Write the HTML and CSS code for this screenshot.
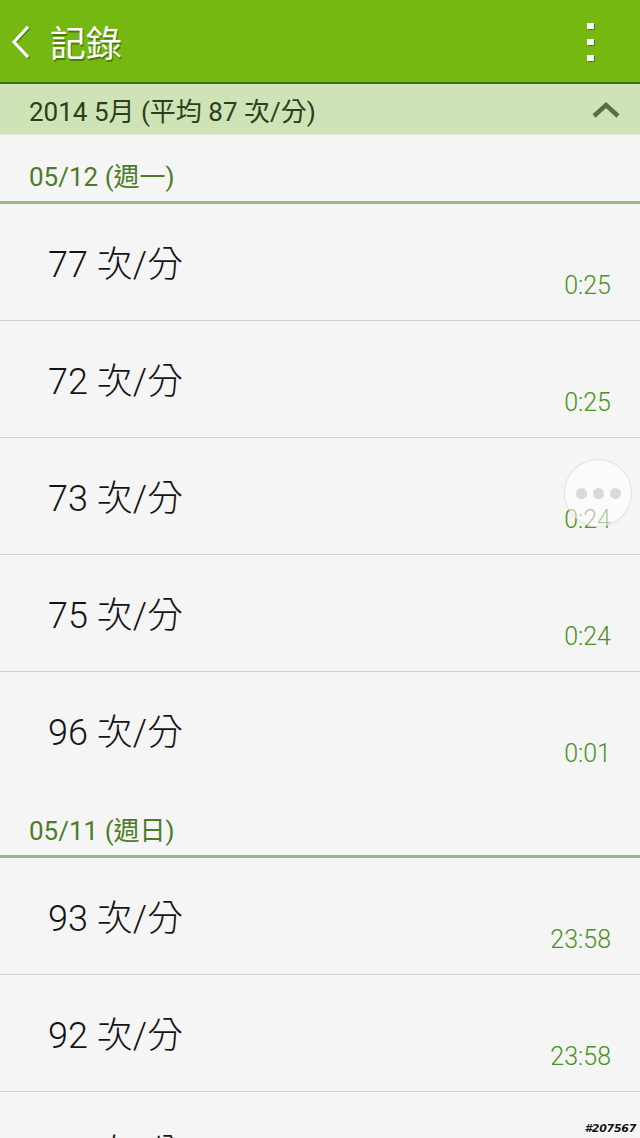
FILE: index.html
```html
<!DOCTYPE html>
<html lang="zh-Hant">
<head>
<meta charset="utf-8">
<title>記錄</title>
<link rel="stylesheet" href="styles.css">
</head>
<body>
<div class="screen">
  <header class="appbar">
    <div class="back">
      <svg width="24" height="34" viewBox="0 0 24 34"><polyline points="16,3 3,17 16,31" fill="none" stroke="#fff" stroke-width="3.2" stroke-linecap="square"/></svg>
    </div>
    <h1 class="title">記錄</h1>
    <div class="menu">
      <span class="dot"></span><span class="dot"></span><span class="dot"></span>
    </div>
  </header>

  <div class="month">
    <span class="month-text">2014 5月 (平均 87 次/分)</span>
    <svg class="caret" width="30" height="18" viewBox="0 0 30 18"><polyline points="3,15 15,4 27,15" fill="none" stroke="#5b6e4c" stroke-width="4.5"/></svg>
  </div>

  <section class="group">
    <div class="day">05/12 (週一)</div>
    <div class="row"><span class="val">77 次/分</span><span class="time">0:25</span></div>
    <div class="row"><span class="val">72 次/分</span><span class="time">0:25</span></div>
    <div class="row"><span class="val">73 次/分</span><span class="time">0:24</span></div>
    <div class="row"><span class="val">75 次/分</span><span class="time">0:24</span></div>
    <div class="row"><span class="val">96 次/分</span><span class="time">0:01</span></div>
  </section>

  <section class="group">
    <div class="day">05/11 (週日)</div>
    <div class="row"><span class="val">93 次/分</span><span class="time">23:58</span></div>
    <div class="row"><span class="val">92 次/分</span><span class="time">23:58</span></div>
    <div class="row"><span class="val">90 次/分</span><span class="time">23:57</span></div>
  </section>

  <div class="float-btn"><span></span><span></span><span></span></div>
  <div class="watermark">#207567</div>
</div>
</body>
</html>
```

FILE: styles.css
```css
html, body {
  margin: 0;
  padding: 0;
  width: 640px;
  height: 1138px;
  overflow: hidden;
  background: #f5f5f5;
}
.screen {
  position: relative;
  width: 640px;
  height: 1138px;
  overflow: hidden;
  font-family: Roboto, "Noto Sans CJK TC", sans-serif;
  background: #f5f5f5;
}
.appbar {
  height: 82px;
  background: #74b811;
  border-bottom: 2px solid #3f6f12;
  display: flex;
  align-items: center;
}
.back {
  width: 24px;
  height: 34px;
  margin-left: 11px;
  margin-top: 2px;
  filter: drop-shadow(1px 1px 0 rgba(40,70,0,0.55));
}
.back svg { display: block; }
.title {
  margin: 0 0 0 15px;
  font-family: "Noto Sans CJK TC", sans-serif;
  font-weight: 400;
  font-size: 36px;
  line-height: 40px;
  color: #fff;
  text-shadow: 1px 2px 0 rgba(40,70,0,0.55);
  flex: 1;
}
.menu {
  display: flex;
  flex-direction: column;
  gap: 10px;
  margin-right: 46px;
  margin-top: 1px;
}
.dot {
  display: block;
  width: 7px;
  height: 6px;
  background: #fff;
  box-shadow: 1px 1px 0 rgba(40,70,0,0.5);
}
.month {
  height: 50px;
  background: #cfe4b6;
  border-bottom: 1px solid #dfe6d8;
  display: flex;
  align-items: flex-start;
  justify-content: space-between;
  padding: 0 19px 0 29px;
}
.month-text {
  font-size: 26px;
  line-height: 44px;
  padding-top: 6px;
  color: #2e3d21;
}
.caret {
  margin-top: 17px;
}
.day {
  box-sizing: border-box;
  height: 69px;
  padding: 27px 0 0 29px;
  font-size: 26px;
  line-height: 30px;
  color: #4e7b28;
  border-bottom: 3px solid #9db887;
}
.row {
  height: 117px;
  box-sizing: border-box;
  border-bottom: 1px solid #d0d3dc;
  display: flex;
  justify-content: space-between;
  align-items: flex-start;
  padding: 0 29px 0 48px;
}
.group .row:last-child {
  border-bottom: none;
}
.val {
  font-size: 36px;
  line-height: 40px;
  padding-top: 41px;
  color: #141414;
  font-weight: 300;
}
.time {
  font-size: 25px;
  line-height: 30px;
  padding-top: 67px;
  color: #4a9220;
  font-weight: 300;
}
.float-btn {
  position: absolute;
  left: 564px;
  top: 459px;
  width: 68px;
  height: 68px;
  box-sizing: border-box;
  border-radius: 50%;
  background: rgba(255,255,255,0.55);
  border: 1px solid rgba(215,215,215,0.7);
  display: flex;
  align-items: center;
  justify-content: center;
  gap: 6px;
}
.float-btn span {
  width: 11px;
  height: 11px;
  border-radius: 50%;
  background: rgba(210,210,210,0.85);
}
.watermark {
  position: absolute;
  right: 4px;
  bottom: 3px;
  font-family: "DejaVu Sans", sans-serif;
  font-weight: bold;
  font-style: italic;
  font-size: 11px;
  letter-spacing: -0.3px;
  color: #111;
  text-shadow: -1px 0 0 #fff, 1px 0 0 #fff, 0 -1px 0 #fff, 0 1px 0 #fff;
}
```
